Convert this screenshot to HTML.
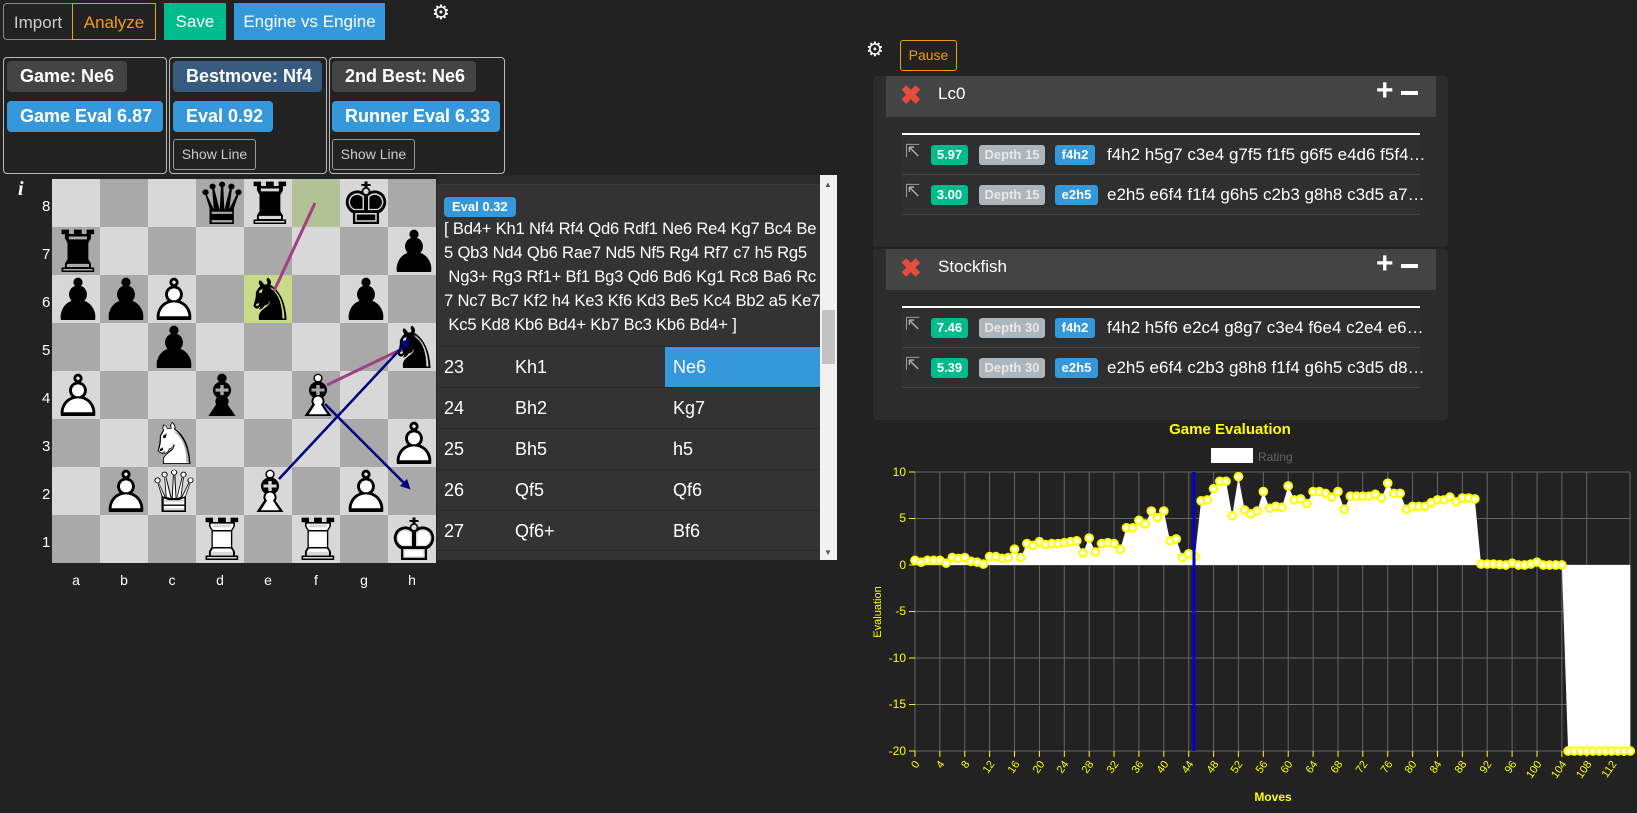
<!DOCTYPE html>
<html><head><meta charset="utf-8">
<style>
*{box-sizing:border-box;margin:0;padding:0}
body{width:1637px;height:813px;background:#222;font-family:"Liberation Sans",Arial,sans-serif;color:#fff;position:relative;overflow:hidden}
.a{position:absolute}
.btn{position:absolute;top:3px;height:37px;line-height:37px;font-size:17px;text-align:center}
.box{position:absolute;top:57px;height:117px;border:1px solid #bbb;border-radius:4px}
.bd{position:absolute;height:31px;line-height:31px;font-weight:bold;font-size:18px;padding:0 13px;border-radius:4px;white-space:nowrap}
.sl{position:absolute;top:139px;height:31px;line-height:29px;font-size:14px;color:#ccc;border:1px solid #999;border-radius:3px;text-align:center;width:83px}
.sq{position:absolute;width:48px;height:48px}
.pc{position:absolute;width:48px;height:48px;text-align:center;line-height:50px;font-size:58px;font-family:"DejaVu Sans",sans-serif;overflow:visible}
.pc span{position:absolute;left:0;top:0;width:48px}
.row{position:absolute;left:437px;width:383px;height:41px;line-height:41px;font-size:18px;border-top:1px solid #2a2a2a;background:#333}
.row b{font-weight:normal;position:absolute}
.eh{position:absolute;left:886px;width:550px;height:41px;background:#444}
.tr{position:absolute;left:902px;width:518px;height:40px;border-bottom:1px solid #444;background:#2f2f2f}
.tb{position:absolute;top:10px;height:20px;line-height:20px;font-size:13px;font-weight:bold;border-radius:3px;text-align:center}
.lt{position:absolute;left:205px;top:0;line-height:40px;font-size:17px;white-space:nowrap}
</style></head><body>

<div class="btn" style="left:3px;width:70px;border:1px solid #888;border-radius:4px 0 0 4px;color:#ccc">Import</div>
<div class="btn" style="left:72px;width:84px;border:1px solid #f39c12;color:#f39c12">Analyze</div>
<div class="btn" style="left:164px;width:62px;background:#00bc8c">Save</div>
<div class="btn" style="left:234px;width:151px;background:#3498db">Engine vs Engine</div>
<div class="a" style="left:432px;top:0px;font-size:20px;font-family:'DejaVu Sans'">⚙</div>

<div class="box" style="left:3px;width:164px"></div>
<div class="box" style="left:169px;width:158px"></div>
<div class="box" style="left:329px;width:176px"></div>
<div class="bd" style="left:7px;top:61px;background:#444">Game: Ne6</div>
<div class="bd" style="left:7px;top:101px;width:156px;background:#3498db">Game Eval 6.87</div>
<div class="bd" style="left:173px;top:61px;width:149px;background:#375a7f">Bestmove: Nf4</div>
<div class="bd" style="left:173px;top:101px;width:100px;background:#3498db">Eval 0.92</div>
<div class="sl" style="left:173px">Show Line</div>
<div class="bd" style="left:332px;top:61px;width:144px;background:#444">2nd Best: Ne6</div>
<div class="bd" style="left:332px;top:101px;width:168px;background:#3498db">Runner Eval 6.33</div>
<div class="sl" style="left:332px">Show Line</div>

<div class="a" style="left:18px;top:178px;font-size:20px;font-style:italic;font-weight:bold;font-family:'Liberation Serif',serif">i</div>
<div id="board" class="a" style="left:52px;top:179px;width:384px;height:384px">
<div class="sq" style="left:0;top:0;background:#d8d8d8"></div><div class="sq" style="left:48px;top:0;background:#a9a9a9"></div><div class="sq" style="left:96px;top:0;background:#d8d8d8"></div><div class="sq" style="left:144px;top:0;background:#a9a9a9"></div><div class="sq" style="left:192px;top:0;background:#d8d8d8"></div><div class="sq" style="left:240px;top:0;background:#b3c296"></div><div class="sq" style="left:288px;top:0;background:#d8d8d8"></div><div class="sq" style="left:336px;top:0;background:#a9a9a9"></div>
<div class="sq" style="left:0;top:48px;background:#a9a9a9"></div><div class="sq" style="left:48px;top:48px;background:#d8d8d8"></div><div class="sq" style="left:96px;top:48px;background:#a9a9a9"></div><div class="sq" style="left:144px;top:48px;background:#d8d8d8"></div><div class="sq" style="left:192px;top:48px;background:#a9a9a9"></div><div class="sq" style="left:240px;top:48px;background:#d8d8d8"></div><div class="sq" style="left:288px;top:48px;background:#a9a9a9"></div><div class="sq" style="left:336px;top:48px;background:#d8d8d8"></div>
<div class="sq" style="left:0;top:96px;background:#d8d8d8"></div><div class="sq" style="left:48px;top:96px;background:#a9a9a9"></div><div class="sq" style="left:96px;top:96px;background:#d8d8d8"></div><div class="sq" style="left:144px;top:96px;background:#a9a9a9"></div><div class="sq" style="left:192px;top:96px;background:#c9da88"></div><div class="sq" style="left:240px;top:96px;background:#a9a9a9"></div><div class="sq" style="left:288px;top:96px;background:#d8d8d8"></div><div class="sq" style="left:336px;top:96px;background:#a9a9a9"></div>
<div class="sq" style="left:0;top:144px;background:#a9a9a9"></div><div class="sq" style="left:48px;top:144px;background:#d8d8d8"></div><div class="sq" style="left:96px;top:144px;background:#a9a9a9"></div><div class="sq" style="left:144px;top:144px;background:#d8d8d8"></div><div class="sq" style="left:192px;top:144px;background:#a9a9a9"></div><div class="sq" style="left:240px;top:144px;background:#d8d8d8"></div><div class="sq" style="left:288px;top:144px;background:#a9a9a9"></div><div class="sq" style="left:336px;top:144px;background:#d8d8d8"></div>
<div class="sq" style="left:0;top:192px;background:#d8d8d8"></div><div class="sq" style="left:48px;top:192px;background:#a9a9a9"></div><div class="sq" style="left:96px;top:192px;background:#d8d8d8"></div><div class="sq" style="left:144px;top:192px;background:#a9a9a9"></div><div class="sq" style="left:192px;top:192px;background:#d8d8d8"></div><div class="sq" style="left:240px;top:192px;background:#a9a9a9"></div><div class="sq" style="left:288px;top:192px;background:#d8d8d8"></div><div class="sq" style="left:336px;top:192px;background:#a9a9a9"></div>
<div class="sq" style="left:0;top:240px;background:#a9a9a9"></div><div class="sq" style="left:48px;top:240px;background:#d8d8d8"></div><div class="sq" style="left:96px;top:240px;background:#a9a9a9"></div><div class="sq" style="left:144px;top:240px;background:#d8d8d8"></div><div class="sq" style="left:192px;top:240px;background:#a9a9a9"></div><div class="sq" style="left:240px;top:240px;background:#d8d8d8"></div><div class="sq" style="left:288px;top:240px;background:#a9a9a9"></div><div class="sq" style="left:336px;top:240px;background:#d8d8d8"></div>
<div class="sq" style="left:0;top:288px;background:#d8d8d8"></div><div class="sq" style="left:48px;top:288px;background:#a9a9a9"></div><div class="sq" style="left:96px;top:288px;background:#d8d8d8"></div><div class="sq" style="left:144px;top:288px;background:#a9a9a9"></div><div class="sq" style="left:192px;top:288px;background:#d8d8d8"></div><div class="sq" style="left:240px;top:288px;background:#a9a9a9"></div><div class="sq" style="left:288px;top:288px;background:#d8d8d8"></div><div class="sq" style="left:336px;top:288px;background:#a9a9a9"></div>
<div class="sq" style="left:0;top:336px;background:#a9a9a9"></div><div class="sq" style="left:48px;top:336px;background:#d8d8d8"></div><div class="sq" style="left:96px;top:336px;background:#a9a9a9"></div><div class="sq" style="left:144px;top:336px;background:#d8d8d8"></div><div class="sq" style="left:192px;top:336px;background:#a9a9a9"></div><div class="sq" style="left:240px;top:336px;background:#d8d8d8"></div><div class="sq" style="left:288px;top:336px;background:#a9a9a9"></div><div class="sq" style="left:336px;top:336px;background:#d8d8d8"></div>
<div class="pc" style="left:144px;top:0;color:#000">♛</div>
<div class="pc" style="left:192px;top:0;color:#000">♜</div>
<div class="pc" style="left:288px;top:0;color:#000">♚</div>
<div class="pc" style="left:0;top:48px;color:#000">♜</div>
<div class="pc" style="left:336px;top:48px;color:#000">♟</div>
<div class="pc" style="left:0;top:96px;color:#000">♟</div>
<div class="pc" style="left:48px;top:96px;color:#000">♟</div>
<div class="pc" style="left:192px;top:96px;color:#000">♞</div>
<div class="pc" style="left:288px;top:96px;color:#000">♟</div>
<div class="pc" style="left:96px;top:144px;color:#000">♟</div>
<div class="pc" style="left:336px;top:144px;color:#000">♞</div>
<div class="pc" style="left:144px;top:192px;color:#000">♝</div>
<div class="pc" style="left:96px;top:96px"><span style="color:#fff">♟</span><span style="color:#000">♙</span></div>
<div class="pc" style="left:0;top:192px"><span style="color:#fff">♟</span><span style="color:#000">♙</span></div>
<div class="pc" style="left:240px;top:192px"><span style="color:#fff">♝</span><span style="color:#000">♗</span></div>
<div class="pc" style="left:96px;top:240px"><span style="color:#fff">♞</span><span style="color:#000">♘</span></div>
<div class="pc" style="left:336px;top:240px"><span style="color:#fff">♟</span><span style="color:#000">♙</span></div>
<div class="pc" style="left:48px;top:288px"><span style="color:#fff">♟</span><span style="color:#000">♙</span></div>
<div class="pc" style="left:96px;top:288px"><span style="color:#fff">♛</span><span style="color:#000">♕</span></div>
<div class="pc" style="left:192px;top:288px"><span style="color:#fff">♝</span><span style="color:#000">♗</span></div>
<div class="pc" style="left:288px;top:288px"><span style="color:#fff">♟</span><span style="color:#000">♙</span></div>
<div class="pc" style="left:144px;top:336px"><span style="color:#fff">♜</span><span style="color:#000">♖</span></div>
<div class="pc" style="left:240px;top:336px"><span style="color:#fff">♜</span><span style="color:#000">♖</span></div>
<div class="pc" style="left:336px;top:336px"><span style="color:#fff">♚</span><span style="color:#000">♔</span></div>
<svg class="a" style="left:0;top:0" width="384" height="384">
<defs><marker id="ab" markerWidth="4" markerHeight="4" refX="2" refY="2" orient="auto"><path d="M0,0L4,2L0,4z" fill="#000080"/></marker></defs>
<line x1="222" y1="112" x2="263" y2="24" stroke="#a04080" stroke-width="3"/>
<line x1="275" y1="206" x2="350" y2="170" stroke="#a04080" stroke-width="3"/>
<line x1="227" y1="300" x2="355" y2="163" stroke="#000080" stroke-width="2.5" marker-end="url(#ab)"/>
<line x1="273" y1="225" x2="355" y2="307" stroke="#000080" stroke-width="2.5" marker-end="url(#ab)"/>
</svg>
</div>
<div class="a" style="left:42px;top:183px;font-size:15px;line-height:48px;color:#fff;width:10px">8<br>7<br>6<br>5<br>4<br>3<br>2<br>1</div>
<div class="a" style="left:52px;top:572px;width:384px;font-size:14px;display:flex;color:#fff"><span style="width:48px;text-align:center">a</span><span style="width:48px;text-align:center">b</span><span style="width:48px;text-align:center">c</span><span style="width:48px;text-align:center">d</span><span style="width:48px;text-align:center">e</span><span style="width:48px;text-align:center">f</span><span style="width:48px;text-align:center">g</span><span style="width:48px;text-align:center">h</span></div>

<div class="a" style="left:437px;top:175px;width:383px;height:385px;background:#333;overflow:hidden">
 <div style="height:10px;background:#2a2a2a;border-bottom:1px solid #3a3a3a"></div>
 <div class="a" style="left:7px;top:22px;height:20px;line-height:20px;padding:0 8px;background:#3498db;border-radius:4px;font-size:13px;font-weight:bold">Eval 0.32</div>
 <div class="a" style="left:7px;top:42px;width:376px;font-size:16.6px;line-height:24px;white-space:pre;letter-spacing:-0.2px">[ Bd4+ Kh1 Nf4 Rf4 Qd6 Rdf1 Ne6 Re4 Kg7 Bc4 Be
5 Qb3 Nd4 Qb6 Rae7 Nd5 Nf5 Rg4 Rf7 c7 h5 Rg5
 Ng3+ Rg3 Rf1+ Bf1 Bg3 Qd6 Bd6 Kg1 Rc8 Ba6 Rc
7 Nc7 Bc7 Kf2 h4 Ke3 Kf6 Kd3 Be5 Kc4 Bb2 a5 Ke7
 Kc5 Kd8 Kb6 Bd4+ Kb7 Bc3 Kb6 Bd4+ ]</div>
</div>
<div class="row" style="top:346px"><b style="left:7px">23</b><b style="left:78px">Kh1</b><b style="left:228px;top:0;width:155px;height:41px;background:#3498db;padding-left:8px">Ne6</b></div>
<div class="row" style="top:387px"><b style="left:7px">24</b><b style="left:78px">Bh2</b><b style="left:236px">Kg7</b></div>
<div class="row" style="top:428px"><b style="left:7px">25</b><b style="left:78px">Bh5</b><b style="left:236px">h5</b></div>
<div class="row" style="top:469px"><b style="left:7px">26</b><b style="left:78px">Qf5</b><b style="left:236px">Qf6</b></div>
<div class="row" style="top:510px;height:40px"><b style="left:7px">27</b><b style="left:78px">Qf6+</b><b style="left:236px">Bf6</b></div>
<div class="a" style="left:437px;top:550px;width:383px;height:10px;background:#333;border-top:1px solid #2a2a2a"></div>
<div class="a" style="left:820px;top:175px;width:17px;height:385px;background:#f1f1f1"></div>
<div class="a" style="left:822px;top:310px;width:13px;height:54px;background:#c1c1c1"></div>
<div class="a" style="left:824px;top:180px;font-size:8px;color:#555">▲</div>
<div class="a" style="left:824px;top:548px;font-size:8px;color:#555">▼</div>

<div class="a" style="left:866px;top:37px;font-size:20px;font-family:'DejaVu Sans'">⚙</div>
<div class="a" style="left:900px;top:40px;width:57px;height:31px;line-height:29px;border:1px solid #f39c12;border-radius:3px;color:#f39c12;font-size:14px;text-align:center">Pause</div>
<div class="a" style="left:873px;top:76px;width:575px;height:171px;background:#2c2c2c;border-radius:4px"></div>
<div class="a" style="left:873px;top:249px;width:575px;height:171px;background:#2c2c2c;border-radius:4px"></div>

<div class="eh" style="top:76px"></div>
<div class="a" style="left:900px;top:80px;font-size:26px;color:#e74c3c;font-weight:bold">✖</div>
<div class="a" style="left:938px;top:84px;font-size:17px">Lc0</div>
<div class="a" style="left:1376px;top:74px;font-size:30px;font-weight:bold">+</div>
<div class="a" style="left:1401px;top:91px;width:17px;height:4px;background:#fff"></div>
<div class="a" style="left:902px;top:133px;width:518px;height:2px;background:#fff"></div>
<div class="tr" style="top:135px"><span class="a" style="left:3px;top:6px;font-size:18px;color:#aaa">⇱</span><div class="tb" style="left:29px;width:37px;background:#00bc8c">5.97</div><div class="tb" style="left:77px;width:66px;background:#adb5bd;color:#e8e8e8">Depth 15</div><div class="tb" style="left:153px;width:40px;background:#3498db">f4h2</div><div class="lt">f4h2 h5g7 c3e4 g7f5 f1f5 g6f5 e4d6 f5f4…</div></div>
<div class="tr" style="top:175px"><span class="a" style="left:3px;top:6px;font-size:18px;color:#aaa">⇱</span><div class="tb" style="left:29px;width:37px;background:#00bc8c">3.00</div><div class="tb" style="left:77px;width:66px;background:#adb5bd;color:#e8e8e8">Depth 15</div><div class="tb" style="left:153px;width:43px;background:#3498db">e2h5</div><div class="lt">e2h5 e6f4 f1f4 g6h5 c2b3 g8h8 c3d5 a7…</div></div>

<div class="eh" style="top:249px"></div>
<div class="a" style="left:900px;top:253px;font-size:26px;color:#e74c3c;font-weight:bold">✖</div>
<div class="a" style="left:938px;top:257px;font-size:17px">Stockfish</div>
<div class="a" style="left:1376px;top:247px;font-size:30px;font-weight:bold">+</div>
<div class="a" style="left:1401px;top:264px;width:17px;height:4px;background:#fff"></div>
<div class="a" style="left:902px;top:306px;width:518px;height:2px;background:#fff"></div>
<div class="tr" style="top:308px"><span class="a" style="left:3px;top:6px;font-size:18px;color:#aaa">⇱</span><div class="tb" style="left:29px;width:37px;background:#00bc8c">7.46</div><div class="tb" style="left:77px;width:66px;background:#adb5bd;color:#e8e8e8">Depth 30</div><div class="tb" style="left:153px;width:40px;background:#3498db">f4h2</div><div class="lt">f4h2 h5f6 e2c4 g8g7 c3e4 f6e4 c2e4 e6…</div></div>
<div class="tr" style="top:348px"><span class="a" style="left:3px;top:6px;font-size:18px;color:#aaa">⇱</span><div class="tb" style="left:29px;width:37px;background:#00bc8c">5.39</div><div class="tb" style="left:77px;width:66px;background:#adb5bd;color:#e8e8e8">Depth 30</div><div class="tb" style="left:153px;width:43px;background:#3498db">e2h5</div><div class="lt">e2h5 e6f4 c2b3 g8h8 f1f4 g6h5 c3d5 d8…</div></div>

<svg class="a" style="left:0;top:0" width="1637" height="813" font-family="Liberation Sans, sans-serif">
<text x="1230" y="434" fill="#ffff00" font-size="15" font-weight="bold" text-anchor="middle">Game Evaluation</text>
<rect x="1211" y="448" width="42" height="15" fill="#fff"/>
<text x="1258" y="461" fill="#666" font-size="12">Rating</text>
<g stroke="#666" stroke-width="1">
<line x1="915" y1="472" x2="1630" y2="472"/><line x1="915" y1="518.5" x2="1630" y2="518.5"/><line x1="915" y1="565" x2="1630" y2="565"/><line x1="915" y1="611.5" x2="1630" y2="611.5"/><line x1="915" y1="658" x2="1630" y2="658"/><line x1="915" y1="704.5" x2="1630" y2="704.5"/><line x1="915" y1="751" x2="1630" y2="751"/>
<path d="M915 472V751M939.9 472V751M964.8 472V751M989.6 472V751M1014.5 472V751M1039.4 472V751M1064.3 472V751M1089.2 472V751M1114 472V751M1138.9 472V751M1163.8 472V751M1188.7 472V751M1213.6 472V751M1238.4 472V751M1263.3 472V751M1288.2 472V751M1313.1 472V751M1338 472V751M1362.8 472V751M1387.7 472V751M1412.6 472V751M1437.5 472V751M1462.4 472V751M1487.2 472V751M1512.1 472V751M1537 472V751M1561.9 472V751M1586.8 472V751M1630 472V751"/>
</g>
<g stroke="#ffff00"><path d="M909 472H915M909 518.5H915M909 565H915M909 611.5H915M909 658H915M909 704.5H915M909 751H915M915 751V757M939.9 751V757M964.8 751V757M989.6 751V757M1014.5 751V757M1039.4 751V757M1064.3 751V757M1089.2 751V757M1114 751V757M1138.9 751V757M1163.8 751V757M1188.7 751V757M1213.6 751V757M1238.4 751V757M1263.3 751V757M1288.2 751V757M1313.1 751V757M1338 751V757M1362.8 751V757M1387.7 751V757M1412.6 751V757M1437.5 751V757M1462.4 751V757M1487.2 751V757M1512.1 751V757M1537 751V757M1561.9 751V757M1586.8 751V757"/></g>
<g fill="#ffff00" font-size="12" text-anchor="end">
<text x="906" y="476">10</text><text x="906" y="522">5</text><text x="906" y="569">0</text><text x="906" y="615">-5</text><text x="906" y="662">-10</text><text x="906" y="708">-15</text><text x="906" y="755">-20</text>
</g>
<g fill="#ffff00" font-size="11" text-anchor="end">
<text transform="translate(920,764) rotate(-55)">0</text><text transform="translate(945,764) rotate(-55)">4</text><text transform="translate(970,764) rotate(-55)">8</text><text transform="translate(995,764) rotate(-55)">12</text><text transform="translate(1020,764) rotate(-55)">16</text><text transform="translate(1045,764) rotate(-55)">20</text><text transform="translate(1069,764) rotate(-55)">24</text><text transform="translate(1094,764) rotate(-55)">28</text><text transform="translate(1119,764) rotate(-55)">32</text><text transform="translate(1144,764) rotate(-55)">36</text><text transform="translate(1169,764) rotate(-55)">40</text><text transform="translate(1194,764) rotate(-55)">44</text><text transform="translate(1219,764) rotate(-55)">48</text><text transform="translate(1243,764) rotate(-55)">52</text><text transform="translate(1268,764) rotate(-55)">56</text><text transform="translate(1293,764) rotate(-55)">60</text><text transform="translate(1318,764) rotate(-55)">64</text><text transform="translate(1343,764) rotate(-55)">68</text><text transform="translate(1368,764) rotate(-55)">72</text><text transform="translate(1393,764) rotate(-55)">76</text><text transform="translate(1417,764) rotate(-55)">80</text><text transform="translate(1442,764) rotate(-55)">84</text><text transform="translate(1467,764) rotate(-55)">88</text><text transform="translate(1492,764) rotate(-55)">92</text><text transform="translate(1517,764) rotate(-55)">96</text><text transform="translate(1542,764) rotate(-55)">100</text><text transform="translate(1567,764) rotate(-55)">104</text><text transform="translate(1592,764) rotate(-55)">108</text><text transform="translate(1617,764) rotate(-55)">112</text>
</g>
<text x="1273" y="801" fill="#ffff00" font-size="12" font-weight="bold" text-anchor="middle">Moves</text>
<text transform="translate(881,612) rotate(-90)" fill="#ffff00" font-size="11" text-anchor="middle">Evaluation</text>
<g transform="translate(915,565) scale(6.22,-9.3)">
<polygon fill="#fff" points="0,0 0,.5 1,.3 2,.5 3,.5 4,.5 5,.2 6,.8 7,.7 8,.8 9,.4 10,.3 11,.1 12,.9 13,.9 14,.7 15,.8 16,1.7 17,.8 18,2.3 19,2.1 20,2.5 21,2.2 22,2.3 23,2.3 24,2.4 25,2.5 26,2.6 27,1.3 28,2.9 29,1.4 30,2.3 31,2.4 32,2.3 33,1.7 34,4 35,4 36,4.8 37,4.4 38,5.8 39,5.1 40,5.8 41,2.6 42,2.8 43,.8 44,1.2 45,.9 46,6.9 47,7 48,8.2 49,9 50,9 51,5.3 52,9.5 53,5.9 54,5.5 55,5.8 56,7.9 57,6.1 58,6.3 59,6.2 60,8.5 61,7 62,7.1 63,6.6 64,7.9 65,7.9 66,7.7 67,7.3 68,7.9 69,6 70,7.4 71,7.4 72,7.4 73,7.4 74,7.6 75,7.2 76,8.8 77,7.7 78,7.7 79,6 80,6.3 81,6.3 82,6.3 83,6.7 84,7 85,7 86,7.3 87,6.8 88,7.2 89,7.2 90,7.1 91,.1 92,.1 93,.1 94,.05 95,0 96,.2 97,0 98,0 99,.1 100,.3 101,0 102,0 103,0 104,0 105,-20 106,-20 107,-20 108,-20 109,-20 110,-20 111,-20 112,-20 113,-20 114,-20 115,-20 115,0"/>
<g fill="#fff" stroke="#ffff00" stroke-width="2.2">
<ellipse vector-effect="non-scaling-stroke" cx="0" cy=".5" rx=".6" ry=".4"/><ellipse vector-effect="non-scaling-stroke" cx="1" cy=".3" rx=".6" ry=".4"/><ellipse vector-effect="non-scaling-stroke" cx="2" cy=".5" rx=".6" ry=".4"/><ellipse vector-effect="non-scaling-stroke" cx="3" cy=".5" rx=".6" ry=".4"/><ellipse vector-effect="non-scaling-stroke" cx="4" cy=".5" rx=".6" ry=".4"/><ellipse vector-effect="non-scaling-stroke" cx="5" cy=".2" rx=".6" ry=".4"/><ellipse vector-effect="non-scaling-stroke" cx="6" cy=".8" rx=".6" ry=".4"/><ellipse vector-effect="non-scaling-stroke" cx="7" cy=".7" rx=".6" ry=".4"/><ellipse vector-effect="non-scaling-stroke" cx="8" cy=".8" rx=".6" ry=".4"/><ellipse vector-effect="non-scaling-stroke" cx="9" cy=".4" rx=".6" ry=".4"/><ellipse vector-effect="non-scaling-stroke" cx="10" cy=".3" rx=".6" ry=".4"/><ellipse vector-effect="non-scaling-stroke" cx="11" cy=".1" rx=".6" ry=".4"/><ellipse vector-effect="non-scaling-stroke" cx="12" cy=".9" rx=".6" ry=".4"/><ellipse vector-effect="non-scaling-stroke" cx="13" cy=".9" rx=".6" ry=".4"/><ellipse vector-effect="non-scaling-stroke" cx="14" cy=".7" rx=".6" ry=".4"/><ellipse vector-effect="non-scaling-stroke" cx="15" cy=".8" rx=".6" ry=".4"/><ellipse vector-effect="non-scaling-stroke" cx="16" cy="1.7" rx=".6" ry=".4"/><ellipse vector-effect="non-scaling-stroke" cx="17" cy=".8" rx=".6" ry=".4"/><ellipse vector-effect="non-scaling-stroke" cx="18" cy="2.3" rx=".6" ry=".4"/><ellipse vector-effect="non-scaling-stroke" cx="19" cy="2.1" rx=".6" ry=".4"/><ellipse vector-effect="non-scaling-stroke" cx="20" cy="2.5" rx=".6" ry=".4"/><ellipse vector-effect="non-scaling-stroke" cx="21" cy="2.2" rx=".6" ry=".4"/><ellipse vector-effect="non-scaling-stroke" cx="22" cy="2.3" rx=".6" ry=".4"/><ellipse vector-effect="non-scaling-stroke" cx="23" cy="2.3" rx=".6" ry=".4"/><ellipse vector-effect="non-scaling-stroke" cx="24" cy="2.4" rx=".6" ry=".4"/><ellipse vector-effect="non-scaling-stroke" cx="25" cy="2.5" rx=".6" ry=".4"/><ellipse vector-effect="non-scaling-stroke" cx="26" cy="2.6" rx=".6" ry=".4"/><ellipse vector-effect="non-scaling-stroke" cx="27" cy="1.3" rx=".6" ry=".4"/><ellipse vector-effect="non-scaling-stroke" cx="28" cy="2.9" rx=".6" ry=".4"/><ellipse vector-effect="non-scaling-stroke" cx="29" cy="1.4" rx=".6" ry=".4"/><ellipse vector-effect="non-scaling-stroke" cx="30" cy="2.3" rx=".6" ry=".4"/><ellipse vector-effect="non-scaling-stroke" cx="31" cy="2.4" rx=".6" ry=".4"/><ellipse vector-effect="non-scaling-stroke" cx="32" cy="2.3" rx=".6" ry=".4"/><ellipse vector-effect="non-scaling-stroke" cx="33" cy="1.7" rx=".6" ry=".4"/><ellipse vector-effect="non-scaling-stroke" cx="34" cy="4" rx=".6" ry=".4"/><ellipse vector-effect="non-scaling-stroke" cx="35" cy="4" rx=".6" ry=".4"/><ellipse vector-effect="non-scaling-stroke" cx="36" cy="4.8" rx=".6" ry=".4"/><ellipse vector-effect="non-scaling-stroke" cx="37" cy="4.4" rx=".6" ry=".4"/><ellipse vector-effect="non-scaling-stroke" cx="38" cy="5.8" rx=".6" ry=".4"/><ellipse vector-effect="non-scaling-stroke" cx="39" cy="5.1" rx=".6" ry=".4"/><ellipse vector-effect="non-scaling-stroke" cx="40" cy="5.8" rx=".6" ry=".4"/><ellipse vector-effect="non-scaling-stroke" cx="41" cy="2.6" rx=".6" ry=".4"/><ellipse vector-effect="non-scaling-stroke" cx="42" cy="2.8" rx=".6" ry=".4"/><ellipse vector-effect="non-scaling-stroke" cx="43" cy=".8" rx=".6" ry=".4"/><ellipse vector-effect="non-scaling-stroke" cx="44" cy="1.2" rx=".6" ry=".4"/><ellipse vector-effect="non-scaling-stroke" cx="45" cy=".9" rx=".6" ry=".4"/><ellipse vector-effect="non-scaling-stroke" cx="46" cy="6.9" rx=".6" ry=".4"/><ellipse vector-effect="non-scaling-stroke" cx="47" cy="7" rx=".6" ry=".4"/><ellipse vector-effect="non-scaling-stroke" cx="48" cy="8.2" rx=".6" ry=".4"/><ellipse vector-effect="non-scaling-stroke" cx="49" cy="9" rx=".6" ry=".4"/><ellipse vector-effect="non-scaling-stroke" cx="50" cy="9" rx=".6" ry=".4"/><ellipse vector-effect="non-scaling-stroke" cx="51" cy="5.3" rx=".6" ry=".4"/><ellipse vector-effect="non-scaling-stroke" cx="52" cy="9.5" rx=".6" ry=".4"/><ellipse vector-effect="non-scaling-stroke" cx="53" cy="5.9" rx=".6" ry=".4"/><ellipse vector-effect="non-scaling-stroke" cx="54" cy="5.5" rx=".6" ry=".4"/><ellipse vector-effect="non-scaling-stroke" cx="55" cy="5.8" rx=".6" ry=".4"/><ellipse vector-effect="non-scaling-stroke" cx="56" cy="7.9" rx=".6" ry=".4"/><ellipse vector-effect="non-scaling-stroke" cx="57" cy="6.1" rx=".6" ry=".4"/><ellipse vector-effect="non-scaling-stroke" cx="58" cy="6.3" rx=".6" ry=".4"/><ellipse vector-effect="non-scaling-stroke" cx="59" cy="6.2" rx=".6" ry=".4"/><ellipse vector-effect="non-scaling-stroke" cx="60" cy="8.5" rx=".6" ry=".4"/><ellipse vector-effect="non-scaling-stroke" cx="61" cy="7" rx=".6" ry=".4"/><ellipse vector-effect="non-scaling-stroke" cx="62" cy="7.1" rx=".6" ry=".4"/><ellipse vector-effect="non-scaling-stroke" cx="63" cy="6.6" rx=".6" ry=".4"/><ellipse vector-effect="non-scaling-stroke" cx="64" cy="7.9" rx=".6" ry=".4"/><ellipse vector-effect="non-scaling-stroke" cx="65" cy="7.9" rx=".6" ry=".4"/><ellipse vector-effect="non-scaling-stroke" cx="66" cy="7.7" rx=".6" ry=".4"/><ellipse vector-effect="non-scaling-stroke" cx="67" cy="7.3" rx=".6" ry=".4"/><ellipse vector-effect="non-scaling-stroke" cx="68" cy="7.9" rx=".6" ry=".4"/><ellipse vector-effect="non-scaling-stroke" cx="69" cy="6" rx=".6" ry=".4"/><ellipse vector-effect="non-scaling-stroke" cx="70" cy="7.4" rx=".6" ry=".4"/><ellipse vector-effect="non-scaling-stroke" cx="71" cy="7.4" rx=".6" ry=".4"/><ellipse vector-effect="non-scaling-stroke" cx="72" cy="7.4" rx=".6" ry=".4"/><ellipse vector-effect="non-scaling-stroke" cx="73" cy="7.4" rx=".6" ry=".4"/><ellipse vector-effect="non-scaling-stroke" cx="74" cy="7.6" rx=".6" ry=".4"/><ellipse vector-effect="non-scaling-stroke" cx="75" cy="7.2" rx=".6" ry=".4"/><ellipse vector-effect="non-scaling-stroke" cx="76" cy="8.8" rx=".6" ry=".4"/><ellipse vector-effect="non-scaling-stroke" cx="77" cy="7.7" rx=".6" ry=".4"/><ellipse vector-effect="non-scaling-stroke" cx="78" cy="7.7" rx=".6" ry=".4"/><ellipse vector-effect="non-scaling-stroke" cx="79" cy="6" rx=".6" ry=".4"/><ellipse vector-effect="non-scaling-stroke" cx="80" cy="6.3" rx=".6" ry=".4"/><ellipse vector-effect="non-scaling-stroke" cx="81" cy="6.3" rx=".6" ry=".4"/><ellipse vector-effect="non-scaling-stroke" cx="82" cy="6.3" rx=".6" ry=".4"/><ellipse vector-effect="non-scaling-stroke" cx="83" cy="6.7" rx=".6" ry=".4"/><ellipse vector-effect="non-scaling-stroke" cx="84" cy="7" rx=".6" ry=".4"/><ellipse vector-effect="non-scaling-stroke" cx="85" cy="7" rx=".6" ry=".4"/><ellipse vector-effect="non-scaling-stroke" cx="86" cy="7.3" rx=".6" ry=".4"/><ellipse vector-effect="non-scaling-stroke" cx="87" cy="6.8" rx=".6" ry=".4"/><ellipse vector-effect="non-scaling-stroke" cx="88" cy="7.2" rx=".6" ry=".4"/><ellipse vector-effect="non-scaling-stroke" cx="89" cy="7.2" rx=".6" ry=".4"/><ellipse vector-effect="non-scaling-stroke" cx="90" cy="7.1" rx=".6" ry=".4"/><ellipse vector-effect="non-scaling-stroke" cx="91" cy=".1" rx=".6" ry=".4"/><ellipse vector-effect="non-scaling-stroke" cx="92" cy=".1" rx=".6" ry=".4"/><ellipse vector-effect="non-scaling-stroke" cx="93" cy=".1" rx=".6" ry=".4"/><ellipse vector-effect="non-scaling-stroke" cx="94" cy=".05" rx=".6" ry=".4"/><ellipse vector-effect="non-scaling-stroke" cx="95" cy="0" rx=".6" ry=".4"/><ellipse vector-effect="non-scaling-stroke" cx="96" cy=".2" rx=".6" ry=".4"/><ellipse vector-effect="non-scaling-stroke" cx="97" cy="0" rx=".6" ry=".4"/><ellipse vector-effect="non-scaling-stroke" cx="98" cy="0" rx=".6" ry=".4"/><ellipse vector-effect="non-scaling-stroke" cx="99" cy=".1" rx=".6" ry=".4"/><ellipse vector-effect="non-scaling-stroke" cx="100" cy=".3" rx=".6" ry=".4"/><ellipse vector-effect="non-scaling-stroke" cx="101" cy="0" rx=".6" ry=".4"/><ellipse vector-effect="non-scaling-stroke" cx="102" cy="0" rx=".6" ry=".4"/><ellipse vector-effect="non-scaling-stroke" cx="103" cy="0" rx=".6" ry=".4"/><ellipse vector-effect="non-scaling-stroke" cx="104" cy="0" rx=".6" ry=".4"/><ellipse vector-effect="non-scaling-stroke" cx="105" cy="-20" rx=".6" ry=".4"/><ellipse vector-effect="non-scaling-stroke" cx="106" cy="-20" rx=".6" ry=".4"/><ellipse vector-effect="non-scaling-stroke" cx="107" cy="-20" rx=".6" ry=".4"/><ellipse vector-effect="non-scaling-stroke" cx="108" cy="-20" rx=".6" ry=".4"/><ellipse vector-effect="non-scaling-stroke" cx="109" cy="-20" rx=".6" ry=".4"/><ellipse vector-effect="non-scaling-stroke" cx="110" cy="-20" rx=".6" ry=".4"/><ellipse vector-effect="non-scaling-stroke" cx="111" cy="-20" rx=".6" ry=".4"/><ellipse vector-effect="non-scaling-stroke" cx="112" cy="-20" rx=".6" ry=".4"/><ellipse vector-effect="non-scaling-stroke" cx="113" cy="-20" rx=".6" ry=".4"/><ellipse vector-effect="non-scaling-stroke" cx="114" cy="-20" rx=".6" ry=".4"/><ellipse vector-effect="non-scaling-stroke" cx="115" cy="-20" rx=".6" ry=".4"/>
</g>
</g>
<line x1="1194" y1="472" x2="1194" y2="751" stroke="#0000dd" stroke-width="3"/>
</svg>
</body></html>
